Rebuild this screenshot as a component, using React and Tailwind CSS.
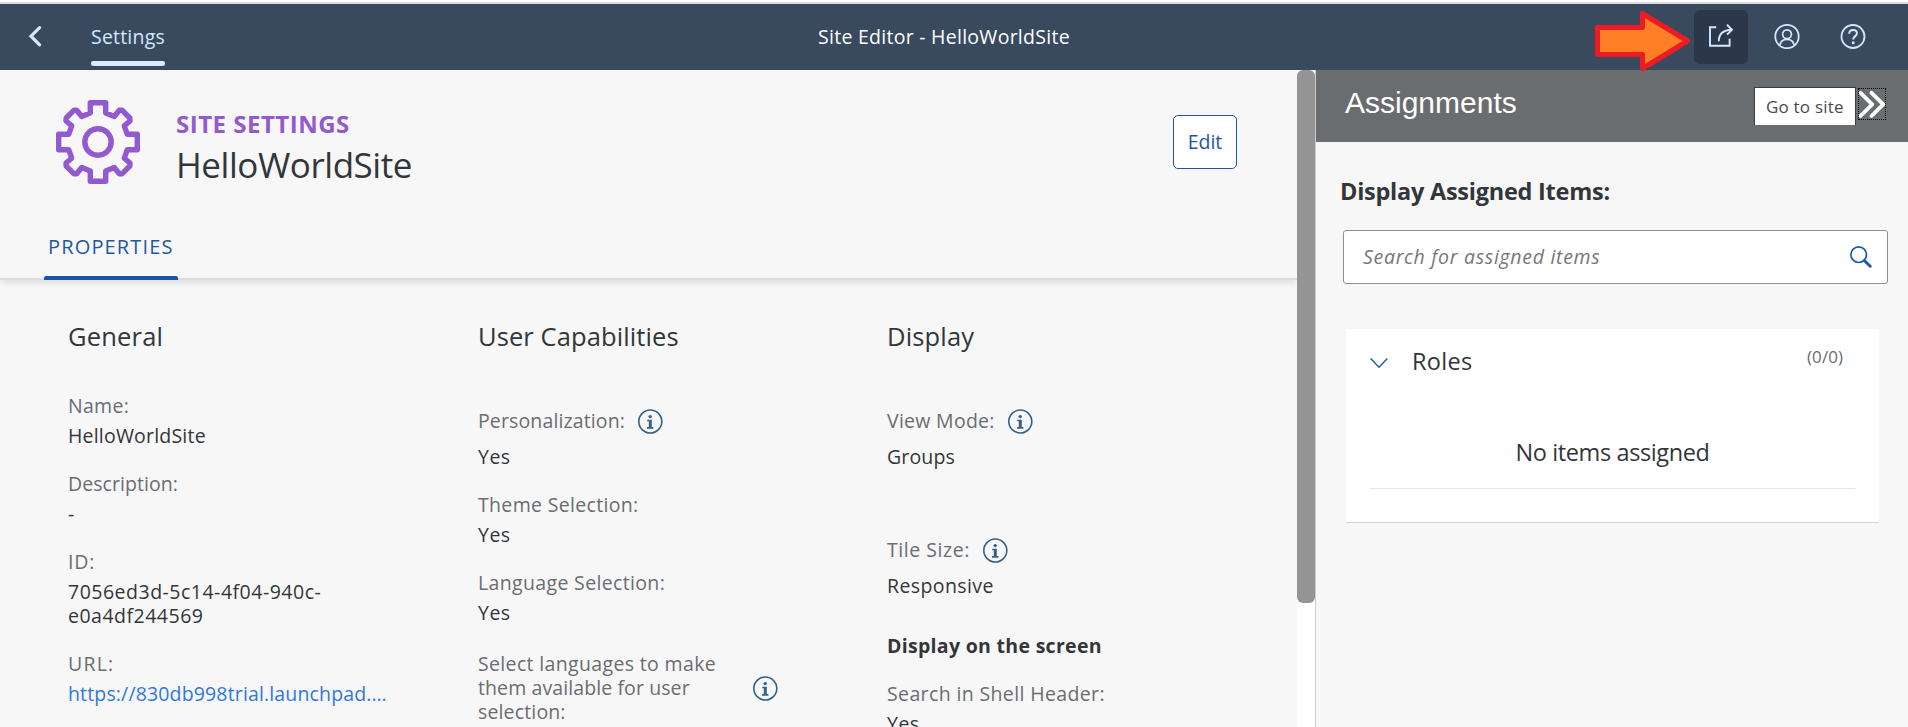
import React from 'react';

function InfoIcon() {
  return (
    <svg viewBox="0 0 25 25" className="h-[25px] w-[25px] shrink-0 text-[#346187]" fill="none">
      <circle cx="12.3" cy="12.5" r="11.5" stroke="currentColor" strokeWidth="1.6" />
      <circle cx="12.2" cy="7.6" r="1.7" fill="currentColor" />
      <path d="M9.2 10.7h4.6v7.4h1.6v1.6H9v-1.6h1.8v-5.8H9.2z" fill="currentColor" />
    </svg>
  );
}

function Field({ label, value, labelClass = '', valueClass = '', info = false, className = '' }) {
  return (
    <div className={'flex flex-col ' + (info ? 'gap-[11px] ' : 'gap-[6px] ') + className}>
      <div className={'flex items-start gap-[13px] text-[#6a6d70] ' + (info ? 'h-[25px]' : 'h-6')}>
        <span className={'whitespace-nowrap ' + labelClass}>{label}</span>
        {info && <InfoIcon />}
      </div>
      <div className={valueClass}>{value}</div>
    </div>
  );
}

function Gear() {
  return (
    <svg viewBox="0 0 84 84" className="h-[84px] w-[84px] shrink-0" fill="none" stroke="#925ace" strokeWidth="5.4" strokeLinejoin="round">
      <path d="M34.3 2.7H49.7V13L58.3 16.5 63.3 10.3 66 10.2 73.8 18 74 21 68.3 25.8 71.3 34.3H81.3V49.7H71.3L68.3 58.2 74 63 73.8 66 66 73.8 63.3 73.7 58.3 67.5 49.7 71V81.3H34.3V71L25.7 67.5 20.7 73.7 18 73.8 10.2 66 10 63 15.7 58.2 12.7 49.7H2.7V34.3H12.7L15.7 25.8 10 21 10.2 18 18 10.2 20.7 10.3 25.7 16.5 34.3 13Z" />
      <circle cx="42" cy="42" r="13.2" />
    </svg>
  );
}

function ShellHeader() {
  return (
    <header className="flex h-[66px] shrink-0 bg-[#394a5f] text-white">
      <div className="flex w-[818px] shrink-0">
        <svg viewBox="0 0 14 22" className="ml-7 mt-[21px] h-[22px] w-[14px]" fill="none" stroke="#d1e8ff" strokeWidth="3.2" strokeLinecap="round">
          <path d="M11.6 2.6 3 11.2l8.6 8.6" />
        </svg>
        <div className="ml-[49px] flex w-[74px] flex-col text-[#d1e8ff]">
          <span className="mt-[21px] whitespace-nowrap tracking-[0.2px]">Settings</span>
          <span className="mt-3 h-[5px] rounded-[2px] bg-[#d9e7ff]" />
        </div>
      </div>
      <h1 className="mt-[21px] w-[876px] shrink-0 tracking-[0.27px]">Site Editor - HelloWorldSite</h1>
      <div className="mt-[6px] flex h-[54px] w-[54px] shrink-0 rounded-[6px] bg-[#2c3849]">
        <svg viewBox="0 0 26 26" className="ml-[14px] mt-[13px] h-[26px] w-[26px]" fill="none" stroke="#d1e8ff" strokeWidth="1.9">
          <path d="M8.2 4.2H2v18.6h19.6v-7" />
          <path d="M10.8 18.2C10.8 11 15 7 23.8 6.7M19 1.8l5 4.9-5 4.9" />
        </svg>
      </div>
      <svg viewBox="0 0 26 26" className="ml-[26px] mt-[19px] h-[26px] w-[26px]" fill="none" stroke="#d1e8ff" strokeWidth="1.8">
        <circle cx="13" cy="13.5" r="11.7" />
        <circle cx="13" cy="11.3" r="4.4" />
        <path d="M5.8 22.3c.7-4 3.6-5.9 7.2-5.9s6.5 1.9 7.2 5.9" />
      </svg>
      <svg viewBox="0 0 26 26" className="ml-[40px] mt-[19px] h-[26px] w-[26px]" fill="none" stroke="#d1e8ff" strokeWidth="1.8">
        <circle cx="13" cy="13.5" r="11.5" />
        <path d="M9.2 10.7c0-2.4 1.6-3.8 3.9-3.8 2.2 0 3.8 1.3 3.8 3.3 0 3-3.7 2.9-3.7 6.3" strokeWidth="2" />
        <circle cx="13.2" cy="19.7" r="1.5" fill="#d1e8ff" stroke="none" />
      </svg>
    </header>
  );
}

function SiteSettings() {
  return (
    <main className="flex w-[1297px] shrink-0 flex-col overflow-hidden bg-[#f7f7f7]">
      <section className="flex h-[210px] shrink-0 flex-col border-b-2 border-[#dcdcdc] shadow-[0_3px_8px_-1px_rgba(0,0,0,0.12)]">
        <div className="flex h-[136px] shrink-0 pl-14 pt-[30px]">
          <Gear />
          <div className="ml-9 flex w-[997px] flex-col whitespace-nowrap">
            <span className="mt-[9px] text-[24px] font-bold leading-[30px] tracking-[0.5px] text-[#925ace]">SITE SETTINGS</span>
            <span className="mt-[4px] text-[35px] leading-[44px] tracking-[-0.45px]">HelloWorldSite</span>
          </div>
          <button className="mt-[15px] h-[54px] w-16 rounded-[5px] border border-[#1f57a4] bg-white leading-6 text-[#1f57a4]">Edit</button>
        </div>
        <div className="ml-11 flex h-[74px] w-[134px] flex-col justify-end text-[#1f57a4]">
          <span className="pl-1 text-[20px] tracking-[1.15px]">PROPERTIES</span>
          <span className="-mb-0.5 mt-[17px] h-1 shrink-0 rounded-t-[2px] bg-[#1c54a3]" />
        </div>
      </section>
      <section className="grid grid-cols-[410px_409px_410px] pl-[68px] pt-10">
        <div>
          <h2 className="text-[25.5px] leading-8 tracking-[0.2px]">General</h2>
          <div className="mt-[42px] flex flex-col gap-6">
            <Field label="Name:" labelClass="tracking-[0.3px]" value="HelloWorldSite" valueClass="tracking-[0.2px]" />
            <Field label="Description:" labelClass="tracking-[0.05px]" value="-" />
            <Field label="ID:" labelClass="tracking-[0.8px]" value={<>7056ed3d-5c14-4f04-940c-<br />e0a4df244569</>} valueClass="tracking-[0.5px]" />
            <Field label="URL:" labelClass="tracking-[1.2px]" value="https://830db998trial.launchpad.…" valueClass="whitespace-nowrap tracking-[0.15px] text-[#2f79dd]" />
          </div>
        </div>
        <div>
          <h2 className="text-[25.5px] leading-8 tracking-[0.1px]">User Capabilities</h2>
          <div className="mt-[57px] flex flex-col gap-6">
            <Field label="Personalization:" labelClass="tracking-[0.13px]" value="Yes" valueClass="tracking-[0.5px]" info />
            <Field label="Theme Selection:" labelClass="tracking-[0.33px]" value="Yes" valueClass="tracking-[0.5px]" />
            <Field label="Language Selection:" labelClass="tracking-[0.35px]" value="Yes" valueClass="tracking-[0.5px]" />
            <div className="mt-[3px] flex w-[300px] items-center justify-between whitespace-nowrap text-[#6a6d70]">
              <span className="flex flex-col tracking-[0.15px]">
                <span className="tracking-[0.35px]">Select languages to make</span>
                <span className="tracking-[0.1px]">them available for user</span>
                <span>selection:</span>
              </span>
              <InfoIcon />
            </div>
          </div>
        </div>
        <div>
          <h2 className="text-[25.5px] leading-8 tracking-[0.15px]">Display</h2>
          <div className="mt-[57px] flex flex-col">
            <Field label="View Mode:" labelClass="tracking-[0.28px]" value="Groups" valueClass="tracking-[0.15px]" info />
            <Field label="Tile Size:" labelClass="tracking-[0.55px]" value="Responsive" valueClass="tracking-[0.4px]" info className="mt-[69px]" />
            <h3 className="mt-9 font-bold tracking-[0.3px]">Display on the screen</h3>
            <Field label="Search in Shell Header:" labelClass="tracking-[0.37px]" value="Yes" valueClass="tracking-[0.5px]" className="mt-6" />
          </div>
        </div>
      </section>
    </main>
  );
}

function Assignments() {
  return (
    <aside className="flex flex-1 flex-col border-l border-[#cccccc] bg-[#f7f7f7]">
      <div className="flex h-[72px] shrink-0 bg-[#6a6d70] text-white">
        <h2 className="w-[438px] shrink-0 pl-[29px] pt-[18px] font-['Liberation_Sans',sans-serif] text-[30px] leading-none">Assignments</h2>
        <div className="mt-[17px] h-[38px] w-[102px] shrink-0 whitespace-nowrap border border-b-0 border-[#3c3c3c] bg-white pl-[11px] pt-[7px] text-[17px] tracking-[0.2px] text-[#4a4a4a]">Go to site</div>
        <div className="ml-0.5 mt-[18px] flex h-8 w-7 shrink-0 border border-dotted border-black">
          <svg viewBox="0 0 26 30" className="h-[30px] w-[26px]" fill="none" stroke="#fff" strokeWidth="3.8" strokeLinecap="round" strokeLinejoin="round">
            <path d="M1.5 3.8 13.2 15.4 1.5 27M12.5 3.8 24.2 15.4 12.5 27" />
          </svg>
        </div>
      </div>
      <h3 className="ml-6 mt-[34px] text-[23.5px] font-bold leading-[30px] tracking-[-0.25px]">Display Assigned Items:</h3>
      <div className="ml-[27px] mt-6 flex h-[54px] w-[545px] shrink-0 justify-between rounded-[3px] border border-[#89919a] bg-white">
        <span className="pl-[19px] pt-[14px] italic tracking-[0.7px] text-[#74777a]">Search for assigned items</span>
        <svg viewBox="0 0 22 22" className="mr-[15px] mt-[15px] h-[22px] w-[22px]" fill="none" stroke="#1f57a4">
          <circle cx="8.7" cy="8.7" r="7.8" strokeWidth="1.7" />
          <path d="m14.4 14.5 5.8 5.7" strokeWidth="3" strokeLinecap="round" />
        </svg>
      </div>
      <section className="ml-[30px] mt-[45px] flex h-[194px] w-[533px] shrink-0 flex-col border-b border-[#d5d5d5] bg-white px-6">
        <div className="flex h-[104px] shrink-0">
          <svg viewBox="0 0 18 12" className="mt-7 h-3 w-[18px]" fill="none" stroke="#1f57a4" strokeWidth="1.4">
            <path d="m.7 1.5 8.3 8.7 8.3-8.7" />
          </svg>
          <span className="ml-6 mt-[17px] w-[371px] text-[23.5px] leading-[30px] tracking-[0.3px]">Roles</span>
          <span className="ml-6 mt-[16px] text-[17px] tracking-[0.1px] text-[#6a6d70]">(0/0)</span>
        </div>
        <div className="h-14 border-b border-[#e5e5e5] pt-1 text-center text-[23.5px] leading-[30px] tracking-[-0.38px]">No items assigned</div>
      </section>
    </aside>
  );
}

export default function App() {
  return (
    <div className="relative flex h-[727px] w-[1908px] flex-col overflow-hidden border-t-2 border-white bg-white font-['Open_Sans','Noto_Sans',sans-serif] text-[19.5px] leading-6 text-[#32363a]">
      <div className="h-0.5 shrink-0 bg-[#dadada]" />
      <ShellHeader />
      <div className="flex min-h-0 flex-1">
        <SiteSettings />
        <div className="w-[18px] shrink-0 bg-white">
          <div className="h-[533px] rounded-[6px] bg-[#949494]" />
        </div>
        <Assignments />
      </div>
      <svg viewBox="0 0 100 64" className="absolute left-[1593px] top-[7px] h-16 w-[100px]" fill="#ff7f27" stroke="#ed1c24" strokeWidth="5" strokeLinejoin="round">
        <path d="M4.5 18.5h45v-14L94.5 32l-45 27.5v-14h-45z" />
      </svg>
    </div>
  );
}
